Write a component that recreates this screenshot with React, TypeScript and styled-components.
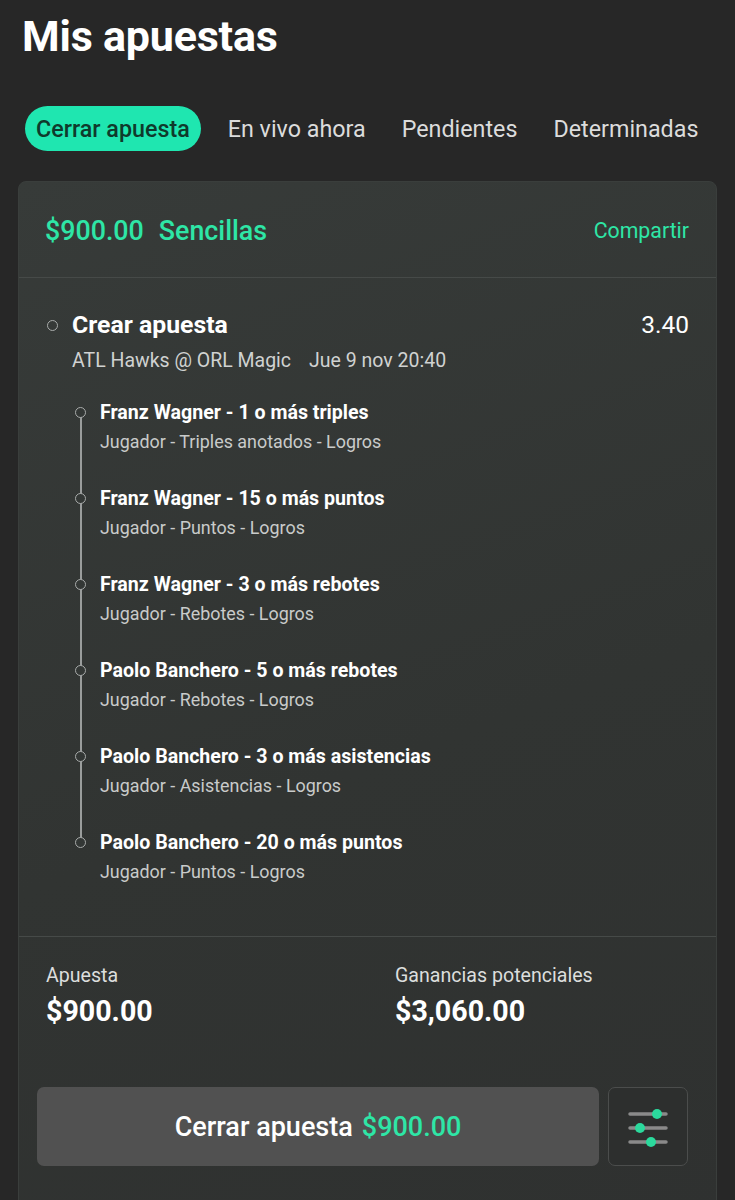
import styled, { createGlobalStyle } from 'styled-components';

const GlobalStyle = createGlobalStyle`
  html, body {
    margin: 0;
    padding: 0;
    background: #272727;
  }
  body {
    font-family: Roboto, 'Noto Sans', 'Liberation Sans', sans-serif;
    color: #ffffff;
  }
`;

const legs = [
  { title: 'Franz Wagner - 1 o más triples', sub: 'Jugador - Triples anotados - Logros' },
  { title: 'Franz Wagner - 15 o más puntos', sub: 'Jugador - Puntos - Logros' },
  { title: 'Franz Wagner - 3 o más rebotes', sub: 'Jugador - Rebotes - Logros' },
  { title: 'Paolo Banchero - 5 o más rebotes', sub: 'Jugador - Rebotes - Logros' },
  { title: 'Paolo Banchero - 3 o más asistencias', sub: 'Jugador - Asistencias - Logros' },
  { title: 'Paolo Banchero - 20 o más puntos', sub: 'Jugador - Puntos - Logros' },
];

const tabs = ['Cerrar apuesta', 'En vivo ahora', 'Pendientes', 'Determinadas'];

const SlidersIcon = () => (
  <svg width='44' height='40' viewBox='0 0 44 40'>
    <g stroke='#8a8a8a' strokeWidth='3.5' strokeLinecap='round'>
      <line x1='4' y1='7' x2='40' y2='7' />
      <line x1='4' y1='21' x2='40' y2='21' />
      <line x1='4' y1='35' x2='40' y2='35' />
    </g>
    <g fill='#2bd99c'>
      <circle cx='31' cy='7' r='5' />
      <circle cx='14' cy='21' r='5' />
      <circle cx='25' cy='35' r='5' />
    </g>
  </svg>
);

const App = () => {
  return (
    <>
      <GlobalStyle />
      <Page>
        <Title>Mis apuestas</Title>
        <Tabs>
          {tabs.map((t, i) => (
            <Tab key={t} $active={i === 0}>
              {t}
            </Tab>
          ))}
        </Tabs>

        <Card>
          <CardHeader>
            <HeaderTitle>
              <span>$900.00</span>
              <span>Sencillas</span>
            </HeaderTitle>
            <ShareLink>Compartir</ShareLink>
          </CardHeader>

          <BetSection>
            <BetTop>
              <BetName>
                <Bullet />
                Crear apuesta
              </BetName>
              <Odds>3.40</Odds>
            </BetTop>
            <Match>
              <span>ATL Hawks @ ORL Magic</span>
              <span>Jue 9 nov 20:40</span>
            </Match>

            <LegList>
              {legs.map((leg, i) => (
                <Leg key={i} $last={i === legs.length - 1}>
                  <LegTitle>{leg.title}</LegTitle>
                  <LegSub>{leg.sub}</LegSub>
                </Leg>
              ))}
            </LegList>
          </BetSection>

          <Footer>
            <Totals>
              <Total>
                <TotalLabel>Apuesta</TotalLabel>
                <TotalValue>$900.00</TotalValue>
              </Total>
              <Total>
                <TotalLabel>Ganancias potenciales</TotalLabel>
                <TotalValue>$3,060.00</TotalValue>
              </Total>
            </Totals>
            <Actions>
              <CashoutButton>
                Cerrar apuesta <Amount>$900.00</Amount>
              </CashoutButton>
              <SettingsButton>
                <SlidersIcon />
              </SettingsButton>
            </Actions>
          </Footer>
        </Card>
      </Page>
    </>
  );
};

const Page = styled.div`
  padding: 12px 18px 0;
  min-height: 1200px;
  box-sizing: border-box;
  overflow: hidden;
`;

const Title = styled.h1`
  margin: 0 0 0 4px;
  font-size: 43px;
  font-weight: 700;
  line-height: 48px;
  letter-spacing: -0.2px;
`;

const Tabs = styled.div`
  display: flex;
  align-items: center;
  gap: 27px;
  margin: 46px 0 30px 7px;
  white-space: nowrap;
`;

const Tab = styled.div<{ $active?: boolean }>`
  height: 45px;
  display: flex;
  align-items: center;
  padding: 0 ${(p) => (p.$active ? '11px' : '0')};
  border-radius: 23px;
  font-size: 23.3px;
  font-weight: ${(p) => (p.$active ? 500 : 400)};
  background: ${(p) => (p.$active ? '#1fe6b0' : 'transparent')};
  color: ${(p) => (p.$active ? '#0f3a2c' : '#dcdcdc')};
  & + & + & {
    margin-left: 9px;
  }
`;

const Card = styled.section`
  background: linear-gradient(160deg, #373b39 0%, #313432 55%, #2f3130 100%);
  border: 1px solid #3a3e3c;
  border-radius: 8px;
  min-height: 1040px;
`;

const CardHeader = styled.div`
  height: 96px;
  display: flex;
  align-items: center;
  justify-content: space-between;
  padding: 2px 27px 0 26px;
  box-sizing: border-box;
  border-bottom: 1px solid #464a48;
`;

const HeaderTitle = styled.div`
  display: flex;
  gap: 15px;
  font-size: 26.8px;
  font-weight: 500;
  color: #2ee6a6;
`;

const ShareLink = styled.span`
  font-size: 21.3px;
  color: #2ee6a6;
`;

const BetSection = styled.div`
  padding: 33px 27px 52px 27px;
  border-bottom: 1px solid #464a48;
`;

const BetTop = styled.div`
  display: flex;
  justify-content: space-between;
  align-items: center;
`;

const BetName = styled.div`
  display: flex;
  align-items: center;
  gap: 14px;
  font-size: 24.8px;
  font-weight: 700;
  line-height: 28px;
`;

const Bullet = styled.span`
  width: 9px;
  height: 9px;
  border-radius: 50%;
  border: 1.5px solid #a9acab;
  margin-left: 1px;
`;

const Odds = styled.span`
  font-size: 24.5px;
  line-height: 28px;
`;

const Match = styled.div`
  display: flex;
  gap: 18px;
  margin: 10px 0 0 26px;
  font-size: 19.5px;
  line-height: 24px;
  color: #d0d2d1;
`;

const LegList = styled.div`
  margin-top: 28px;
`;

const Leg = styled.div<{ $last?: boolean }>`
  position: relative;
  padding: 0 0 ${(p) => (p.$last ? '0' : '33px')} 54px;

  &::before {
    content: '';
    position: absolute;
    left: 29px;
    top: 6px;
    width: 9px;
    height: 9px;
    border-radius: 50%;
    border: 1.5px solid #a9acab;
    background: #333735;
    z-index: 1;
  }

  &::after {
    content: '';
    display: ${(p) => (p.$last ? 'none' : 'block')};
    position: absolute;
    left: 34px;
    top: 12px;
    width: 2px;
    height: 86px;
    background: #9a9d9c;
  }
`;

const LegTitle = styled.div`
  font-size: 19.6px;
  font-weight: 700;
  line-height: 24px;
`;

const LegSub = styled.div`
  margin-top: 5px;
  font-size: 17.9px;
  line-height: 24px;
  color: #c9cbca;
`;

const Footer = styled.div`
  padding: 28px 28px 0 18px;
`;

const Totals = styled.div`
  display: grid;
  grid-template-columns: 349px 1fr;
  padding-left: 9px;
`;

const Total = styled.div`
  display: flex;
  flex-direction: column;
  gap: 8px;
`;

const TotalLabel = styled.span`
  font-size: 19.6px;
  line-height: 22px;
  color: #dcdedd;
`;

const TotalValue = styled.span`
  font-size: 28.6px;
  font-weight: 700;
  line-height: 32px;
`;

const Actions = styled.div`
  display: flex;
  gap: 9px;
  margin-top: 60px;
`;

const CashoutButton = styled.button`
  flex: 1;
  height: 79px;
  border: none;
  border-radius: 7px;
  background: #515151;
  color: #ffffff;
  font-family: inherit;
  font-size: 27px;
  font-weight: 500;
  display: flex;
  align-items: center;
  justify-content: center;
  gap: 9px;
`;

const Amount = styled.span`
  color: #2ee6a6;
`;

const SettingsButton = styled.button`
  width: 80px;
  height: 79px;
  border: 1px solid #4b4d4c;
  border-radius: 7px;
  background: #2d2f2e;
  display: flex;
  align-items: center;
  justify-content: center;
  padding: 0;
`;

export default App;
